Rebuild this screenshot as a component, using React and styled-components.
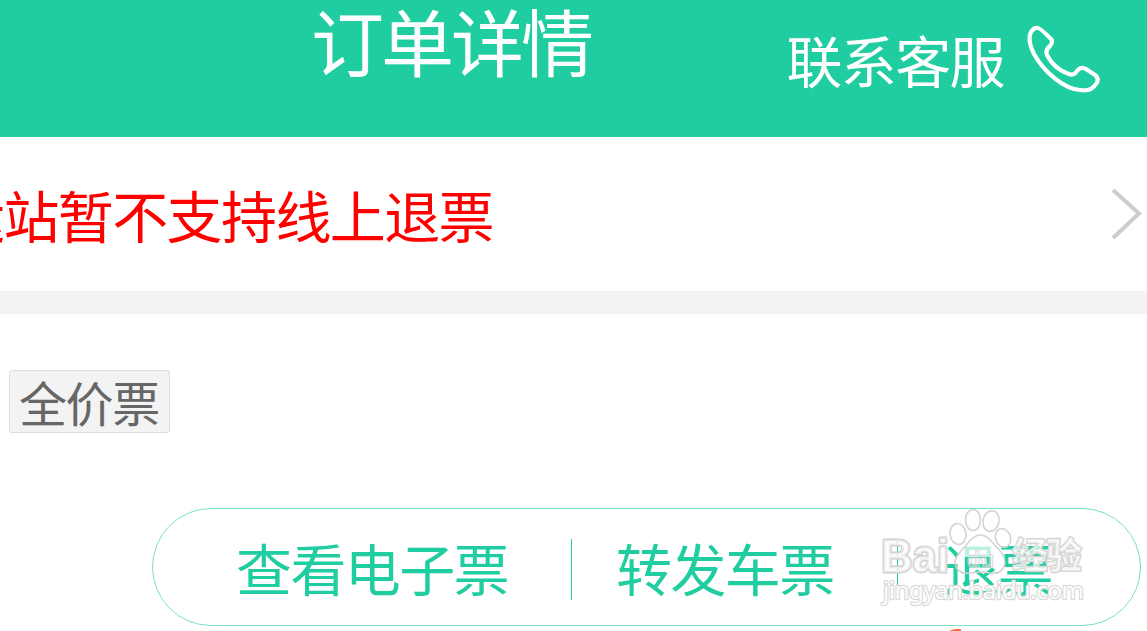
import React from 'react';
import styled, { createGlobalStyle } from 'styled-components';

const GlobalStyle = createGlobalStyle`
    * {
        box-sizing: border-box;
    }

    body {
        margin: 0;
        background-color: #ffffff;
        overflow: hidden;
        font-family: "Noto Sans CJK SC", sans-serif;
    }
`;
const Page = styled.div`
    position: relative;
    width: 1147px;
    height: 631px;
    overflow: hidden;
    background-color: #ffffff;
`;
const Header = styled.header`
    display: flex;
    justify-content: space-between;
    align-items: flex-start;
    height: 137px;
    padding: 0 47px 0 311px;
    color: #ffffff;
    background-color: #20cda0;
`;
const PageTitle = styled.h1`
    margin: 0;
    font-size: 73px;
    font-weight: 400;
    line-height: 79px;
    letter-spacing: -3px;
    white-space: nowrap;
`;
const Contact = styled.div`
    display: flex;
    align-items: flex-start;
    gap: 22px;
    padding-top: 24px;
`;
const ContactLabel = styled.span`
    font-size: 56px;
    line-height: 70px;
    letter-spacing: -1.6px;
    white-space: nowrap;
`;
const PhoneIcon = styled.svg`
    display: block;
    width: 74px;
    height: 70px;
`;
const Notice = styled.div`
    display: flex;
    justify-content: space-between;
    align-items: center;
    height: 154px;
    padding-right: 5px;
`;
const NoticeText = styled.p`
    margin: 0 0 1px -51px;
    color: #ff0000;
    font-size: 56px;
    line-height: 80px;
    letter-spacing: -1.6px;
    white-space: nowrap;
`;
const Arrow = styled.svg`
    display: block;
    width: 32px;
    height: 54px;
`;
const Divider = styled.div`
    height: 23px;
    background-color: #f3f3f3;
`;
const Content = styled.section`
    display: flex;
    flex-flow: column nowrap;
    padding: 56px 6px 0 9px;
`;
const Badge = styled.span`
    align-self: flex-start;
    width: 161px;
    height: 63px;
    padding-left: 9px;
    border: solid 1px #dddddd;
    border-radius: 3px;
    color: #666666;
    background-color: #f3f3f3;
    font-size: 48px;
    line-height: 61px;
    letter-spacing: -1.4px;
    white-space: nowrap;
`;
const Actions = styled.div`
    display: flex;
    align-items: center;
    align-self: flex-end;
    width: 989px;
    height: 118px;
    margin-top: 75px;
    padding-top: 5px;
    border: solid 1px #79e1c6;
    border-radius: 59px;
`;
const Action = styled.button`
    width: ${props => props.$width}px;
    height: 61px;
    padding: 0 0 5px ${props => props.$indent}px;
    border: none;
    border-left: ${props => props.$first ? "none" : "solid 1px #20cda0"};
    color: #20cda0;
    background: transparent;
    font-family: inherit;
    font-size: 56px;
    line-height: 56px;
    letter-spacing: -1.6px;
    text-align: left;
    white-space: nowrap;
`;
const Watermark = styled.svg`
    position: absolute;
    left: 870px;
    top: 500px;
    width: 230px;
    height: 131px;
    font-family: "Liberation Sans", "Noto Sans CJK SC", sans-serif;

    text {
        paint-order: stroke;
        stroke-linejoin: round;
    }
`;

const actions = [
    { label: '查看电子票', width: 418, indent: 83 },
    { label: '转发车票', width: 326, indent: 44 },
    { label: '退票', width: 243, indent: 45 },
];

export default function App() {
    return (
        <React.Fragment>
            <GlobalStyle />

            <Page>
                <Header>
                    <PageTitle>订单详情</PageTitle>
                    <Contact>
                        <ContactLabel>联系客服</ContactLabel>
                        <PhoneIcon viewBox="0 0 74 70" fill="none" stroke="#ffffff" strokeWidth="4.2" strokeLinejoin="round">
                            <path d="M5 8 Q8 3 12 4 Q14 4 24 14 Q28 17 24 22 Q19 26 21 31 C26 41 34 47 43 50 Q48 52 51 47 Q55 42 60 45 L69 51 Q74 55 70 60 Q65 68 54 66 C38 65 18 48 8 30 Q1 16 5 8 Z" />
                        </PhoneIcon>
                    </Contact>
                </Header>

                <Notice>
                    <NoticeText>运站暂不支持线上退票</NoticeText>
                    <Arrow viewBox="0 0 32 54" fill="none" stroke="#cdcdcd" strokeWidth="4">
                        <path d="M3 3 L29 26.5 L3 51" />
                    </Arrow>
                </Notice>

                <Divider />

                <Content>
                    <Badge>全价票</Badge>
                    <Actions>
                        {actions.map((item, index) => (
                            <Action
                                key={item.label}
                                $first={index === 0}
                                $width={item.width}
                                $indent={item.indent}
                            >{item.label}</Action>
                        ))}
                    </Actions>
                </Content>

                <Watermark viewBox="0 0 230 131" fill="#ffffff" fillOpacity="0.6" stroke="#d3d3d3" strokeWidth="1.6">
                    <path d="M93 44 H122 V57 H93 Z" fillOpacity="0.7" stroke="none" />
                    <ellipse cx="88" cy="34" rx="8" ry="10.5" transform="rotate(-8 88 34)" />
                    <ellipse cx="103" cy="20" rx="7.5" ry="10.5" />
                    <ellipse cx="121" cy="21" rx="8" ry="10.5" transform="rotate(12 121 21)" />
                    <ellipse cx="133" cy="38" rx="7.5" ry="9.5" transform="rotate(-20 133 38)" />
                    <path d="M97 44 Q110 27 122 42 C128 49 135 54 135 63 Q133 75 120 73 Q110 71 100 73 Q87 75 85 63 C85 55 92 51 97 44 Z" fill="none" />
                    <text x="11" y="72" fontSize="47" fontWeight="bold" strokeWidth="3" textLength="68" lengthAdjust="spacingAndGlyphs">Bai</text>
                    <text x="97" y="67" fontSize="22" fontWeight="bold" strokeWidth="1.6" fillOpacity="0.2" strokeOpacity="0.7" textLength="27" lengthAdjust="spacingAndGlyphs">du</text>
                    <text x="142" y="69" fontSize="36" fontWeight="bold" fontFamily="Noto Sans CJK SC, sans-serif" strokeWidth="2.4" textLength="70">经验</text>
                    <text x="13" y="99" fontSize="24" fontFamily="Noto Sans, sans-serif" fillOpacity="0.95" stroke="#dadada" strokeWidth="2.4" textLength="201">jingyan.baidu.com</text>
                    <path d="M79 131 Q86 128 91 129.3 V131 Z" fill="#f76b32" fillOpacity="1" stroke="none" />
                </Watermark>
            </Page>
        </React.Fragment>
    )
}
